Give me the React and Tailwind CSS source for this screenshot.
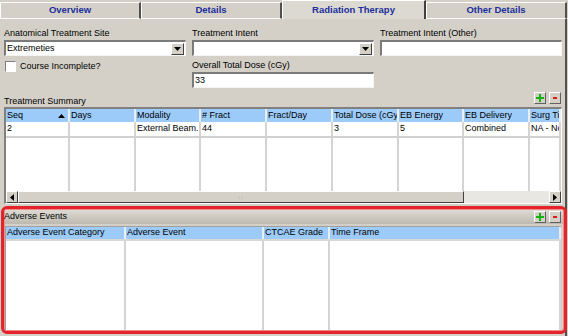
import React from "react";

const summaryCols = [
  { cls: "w-[64px]", head: "Seq", val: "2", sort: true },
  { cls: "w-[66px]", head: "Days", val: "" },
  { cls: "w-[65px]", head: "Modality", val: "External Beam.." },
  { cls: "w-[66px]", head: "# Fract", val: "44" },
  { cls: "w-[66px]", head: "Fract/Day", val: "" },
  { cls: "w-[66px]", head: "Total Dose (cGy", val: "3" },
  { cls: "w-[65px]", head: "EB Energy", val: "5" },
  { cls: "w-[66px]", head: "EB Delivery", val: "Combined" },
  { cls: "flex-1", head: "Surg Tim", val: "NA - No" },
];

const adverseCols = [
  { cls: "w-[120px]", head: "Adverse Event Category" },
  { cls: "w-[138px]", head: "Adverse Event" },
  { cls: "w-[66px]", head: "CTCAE Grade" },
  { cls: "flex-1", head: "Time Frame" },
];

function Tab({ label, active }) {
  if (active) {
    return (
      <div className="w-[144px] h-[19px] bg-[#dcd9d2] border-t border-l border-white border-r-2 border-r-[#404040] flex items-center justify-center text-[#1a2f9c] font-bold text-[9.5px]">
        {label}
      </div>
    );
  }
  return (
    <div className="w-[141px] h-[19px] pt-[2px] flex flex-col">
      <div className="flex-1 bg-[#d4d0c8] border-t border-l border-white border-r-2 border-r-[#505050] border-b border-b-white flex items-center justify-center text-[#1a2f9c] font-bold text-[9.5px]">
        {label}
      </div>
    </div>
  );
}

function Field({ value, dropdown }) {
  return (
    <div className="h-[16px] bg-white border-t-2 border-l-2 border-t-[#7a7a7a] border-l-[#7a7a7a] border-b border-r border-b-[#f4f4f4] border-r-[#f4f4f4] flex items-center">
      <span className="flex-1 pl-[1px] text-[9px] leading-none">{value}</span>
      {dropdown && (
        <div className="w-[13px] h-[12px] mr-[1px] bg-[#d4d0c8] border-t border-l border-white border-r border-b border-r-[#404040] border-b-[#404040] flex items-center justify-center">
          <svg width="7" height="4" viewBox="0 0 7 4">
            <path d="M0 0h7L3.5 4z" fill="#000" />
          </svg>
        </div>
      )}
    </div>
  );
}

function SmallBtn({ kind }) {
  return (
    <div className="w-[12px] h-[12px] bg-[#d4d0c8] border-t border-l border-white border-r border-b border-r-[#606060] border-b-[#606060] flex items-center justify-center">
      {kind === "plus" ? (
        <svg width="8" height="8" viewBox="0 0 8 8">
          <path d="M3 0h2v3h3v2H5v3H3V5H0V3h3z" fill="#14b214" />
        </svg>
      ) : (
        <svg width="4" height="2" viewBox="0 0 4 2">
          <rect width="4" height="2" fill="#e01818" />
        </svg>
      )}
    </div>
  );
}

function ArrowBtn({ dir }) {
  return (
    <div className="w-[12px] h-full bg-[#d4d0c8] border-t border-l border-white border-r border-b border-r-[#404040] border-b-[#404040] flex items-center justify-center">
      <svg width="4" height="7" viewBox="0 0 4 7">
        {dir === "left" ? <path d="M4 0v7L0 3.5z" fill="#000" /> : <path d="M0 0v7l4-3.5z" fill="#000" />}
      </svg>
    </div>
  );
}

export default function App() {
  return (
    <div className="w-[568px] h-[336px] bg-[#d4d0c8] overflow-hidden flex flex-col font-['Liberation_Sans',Arial,sans-serif] text-black">
      {/* tabs */}
      <div className="flex h-[19px]">
        <Tab label="Overview" />
        <Tab label="Details" />
        <Tab label="Radiation Therapy" active />
        <Tab label="Other Details" />
        <div className="flex-1 pt-[2px]">
          <div className="h-full border-b border-white" />
        </div>
      </div>

      <div className="flex-1 flex flex-col border-r-2 border-r-[#505050] mr-[1px]">
        {/* form fields */}
        <div className="grid grid-cols-[182px_182px_182px] gap-x-[6px] pl-[4px] pt-[8px]">
          <div className="flex flex-col">
            <span className="text-[9px] h-[13px] leading-[13px]">Anatomical Treatment Site</span>
            <Field value="Extremeties" dropdown />
            <label className="flex items-center gap-[4px] mt-[4px] ml-[1px]">
              <span className="w-[11px] h-[11px] bg-white border-t border-l border-[#808080] border-b border-r border-b-white border-r-white" />
              <span className="text-[9px]">Course Incomplete?</span>
            </label>
          </div>
          <div className="flex flex-col">
            <span className="text-[9px] h-[13px] leading-[13px]">Treatment Intent</span>
            <Field value="" dropdown />
            <span className="text-[9px] h-[13px] leading-[13px] mt-[3px]">Overall Total Dose (cGy)</span>
            <Field value="33" />
          </div>
          <div className="flex flex-col">
            <span className="text-[9px] h-[13px] leading-[13px]">Treatment Intent (Other)</span>
            <Field value="" />
          </div>
        </div>

        {/* treatment summary header */}
        <div className="flex items-end justify-between pl-[4px] pr-[4px] h-[18px] mt-[1px]">
          <span className="text-[9px] leading-[11px]">Treatment Summary</span>
          <div className="flex gap-[3px] mb-[3px]">
            <SmallBtn kind="plus" />
            <SmallBtn kind="minus" />
          </div>
        </div>

        {/* treatment summary table */}
        <div className="ml-[4px] w-[558px] h-[97px] border-t-2 border-l-2 border-t-[#808080] border-l-[#808080] border-b border-r border-b-white border-r-white flex flex-col bg-white">
          <div className="flex h-[13px] bg-[#9ccbfa]">
            {summaryCols.map((c) => (
              <div key={c.head} className={`${c.cls} shrink-0 border-r-2 border-r-[#e8eef6] flex items-center overflow-hidden whitespace-nowrap text-[9px] pl-[1px]`}>
                <span className="flex-1">{c.head}</span>
                {c.sort && (
                  <svg width="7" height="4" viewBox="0 0 7 4" className="mr-[3px]">
                    <path d="M3.5 0L7 4H0z" fill="#000" />
                  </svg>
                )}
              </div>
            ))}
          </div>
          <div className="flex h-[16px] border-b-2 border-b-[#d0d0d0]">
            {summaryCols.map((c) => (
              <div key={c.head} className={`${c.cls} shrink-0 border-r-2 border-r-[#d4d4d4] flex items-center overflow-hidden whitespace-nowrap text-[9px] pl-[1px]`}>
                {c.val}
              </div>
            ))}
          </div>
          <div className="flex flex-1">
            {summaryCols.map((c) => (
              <div key={c.head} className={`${c.cls} shrink-0 border-r-2 border-r-[#d4d4d4]`} />
            ))}
          </div>
          <div className="flex h-[12px] bg-[#e9e7e2]">
            <ArrowBtn dir="left" />
            <div className="w-[446px] h-full bg-[#d4d0c8] border-t border-l border-white border-r border-b border-r-[#404040] border-b-[#404040] flex items-center justify-center">
              <span className="text-[6px] leading-none text-[#808080] tracking-[1px]">::</span>
            </div>
            <div className="flex-1" />
            <ArrowBtn dir="right" />
          </div>
        </div>

        {/* adverse events */}
        <div className="mt-[2px] ml-[1px] w-[566px] h-[128px] rounded-[6px] border-[3px] border-[#e4232b] shadow-[inset_0_0_0_1px_#f38a8a] flex flex-col p-[1px]">
          <div className="h-[14px] flex items-center justify-between bg-gradient-to-b from-[#dedbd4] to-[#bdb9b1]">
            <span className="text-[9px] -ml-[1px]">Adverse Events</span>
            <div className="flex gap-[3px] mr-[2px]">
              <SmallBtn kind="plus" />
              <SmallBtn kind="minus" />
            </div>
          </div>
          <div className="mt-[2px] mr-[2px] flex-1 border-t border-l border-[#a0a0a0] bg-white flex flex-col">
            <div className="flex h-[12px] bg-[#9ccbfa]">
              {adverseCols.map((c) => (
                <div key={c.head} className={`${c.cls} shrink-0 border-r-2 border-r-[#e8eef6] flex items-center overflow-hidden whitespace-nowrap text-[9px] pl-[1px]`}>
                  {c.head}
                </div>
              ))}
            </div>
            <div className="h-[2px] bg-[#d8d8d8]" />
            <div className="flex flex-1">
              {adverseCols.map((c) => (
                <div key={c.head} className={`${c.cls} shrink-0 border-r-2 border-r-[#d4d4d4]`} />
              ))}
            </div>
          </div>
        </div>
      </div>
    </div>
  );
}
